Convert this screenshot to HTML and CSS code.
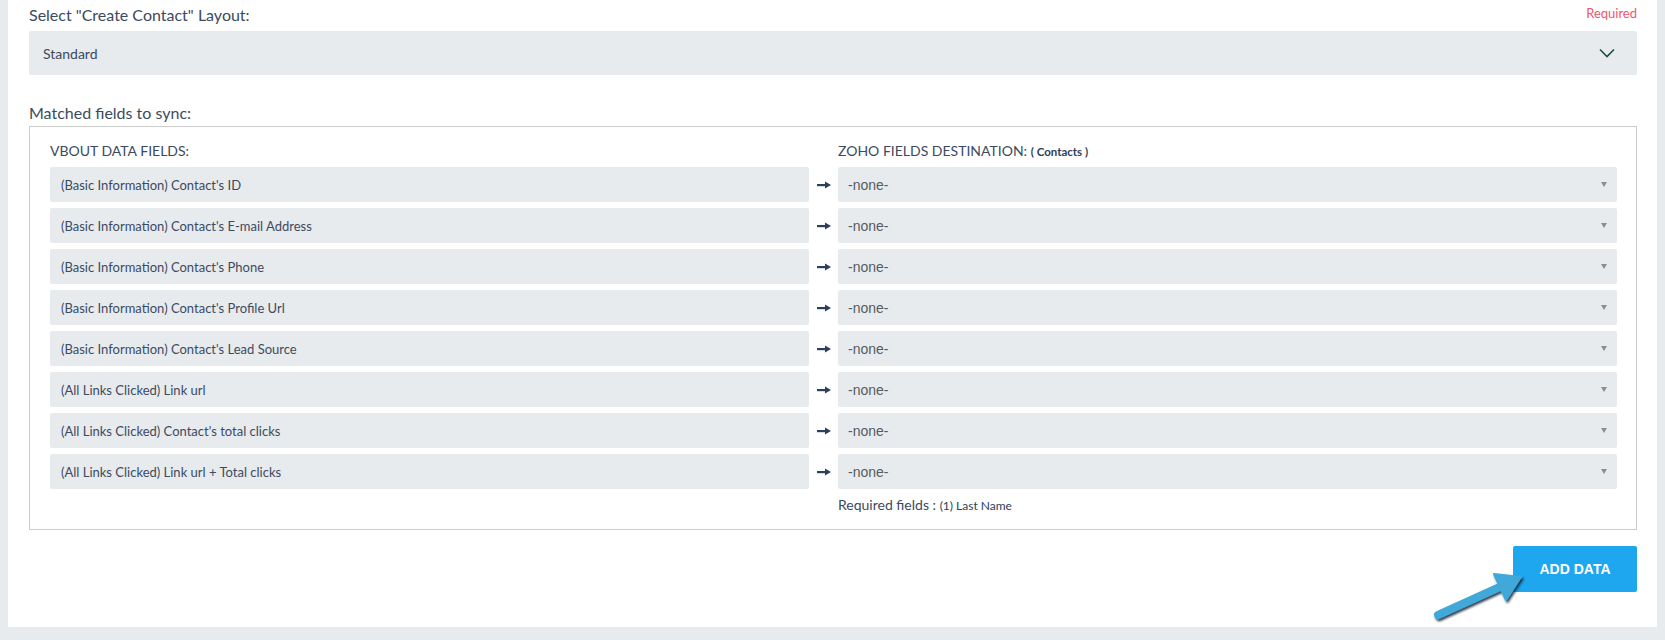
FILE: index.html
```html
<!DOCTYPE html>
<html>
<head>
<meta charset="utf-8">
<link rel="stylesheet" href="styles.css">
</head>
<body>
<div class="panel">
  <div class="label-row">
    <span class="label">Select "Create Contact" Layout:</span>
    <span class="required">Required</span>
  </div>
  <div class="select">
    <span>Standard</span>
    <svg class="chev" width="16" height="10" viewBox="0 0 16 10"><path d="M1 1.5 L8 8.5 L15 1.5" fill="none" stroke="#1d4d40" stroke-width="1.6"/></svg>
  </div>
  <div class="label sync-label">Matched fields to sync:</div>
  <div class="box">
    <div class="grid">
      <div class="head">VBOUT DATA FIELDS:</div>
      <div></div>
      <div class="head">ZOHO FIELDS DESTINATION: <span class="small">( Contacts )</span></div>

      <div class="field">(Basic Information) Contact's ID</div>
      <div class="arrow"><svg width="14" height="8" viewBox="0 0 14 8"><rect x="0" y="3" width="10" height="2.2" fill="#2d3f5e"/><polygon points="8,0.5 14,4.1 8,7.5" fill="#2d3f5e"/></svg></div>
      <div class="dest">-none-<span class="tri"></span></div>

      <div class="field">(Basic Information) Contact's E-mail Address</div>
      <div class="arrow"><svg width="14" height="8" viewBox="0 0 14 8"><rect x="0" y="3" width="10" height="2.2" fill="#2d3f5e"/><polygon points="8,0.5 14,4.1 8,7.5" fill="#2d3f5e"/></svg></div>
      <div class="dest">-none-<span class="tri"></span></div>

      <div class="field">(Basic Information) Contact's Phone</div>
      <div class="arrow"><svg width="14" height="8" viewBox="0 0 14 8"><rect x="0" y="3" width="10" height="2.2" fill="#2d3f5e"/><polygon points="8,0.5 14,4.1 8,7.5" fill="#2d3f5e"/></svg></div>
      <div class="dest">-none-<span class="tri"></span></div>

      <div class="field">(Basic Information) Contact's Profile Url</div>
      <div class="arrow"><svg width="14" height="8" viewBox="0 0 14 8"><rect x="0" y="3" width="10" height="2.2" fill="#2d3f5e"/><polygon points="8,0.5 14,4.1 8,7.5" fill="#2d3f5e"/></svg></div>
      <div class="dest">-none-<span class="tri"></span></div>

      <div class="field">(Basic Information) Contact's Lead Source</div>
      <div class="arrow"><svg width="14" height="8" viewBox="0 0 14 8"><rect x="0" y="3" width="10" height="2.2" fill="#2d3f5e"/><polygon points="8,0.5 14,4.1 8,7.5" fill="#2d3f5e"/></svg></div>
      <div class="dest">-none-<span class="tri"></span></div>

      <div class="field">(All Links Clicked) Link url</div>
      <div class="arrow"><svg width="14" height="8" viewBox="0 0 14 8"><rect x="0" y="3" width="10" height="2.2" fill="#2d3f5e"/><polygon points="8,0.5 14,4.1 8,7.5" fill="#2d3f5e"/></svg></div>
      <div class="dest">-none-<span class="tri"></span></div>

      <div class="field">(All Links Clicked) Contact's total clicks</div>
      <div class="arrow"><svg width="14" height="8" viewBox="0 0 14 8"><rect x="0" y="3" width="10" height="2.2" fill="#2d3f5e"/><polygon points="8,0.5 14,4.1 8,7.5" fill="#2d3f5e"/></svg></div>
      <div class="dest">-none-<span class="tri"></span></div>

      <div class="field">(All Links Clicked) Link url + Total clicks</div>
      <div class="arrow"><svg width="14" height="8" viewBox="0 0 14 8"><rect x="0" y="3" width="10" height="2.2" fill="#2d3f5e"/><polygon points="8,0.5 14,4.1 8,7.5" fill="#2d3f5e"/></svg></div>
      <div class="dest">-none-<span class="tri"></span></div>

      <div></div>
      <div></div>
      <div class="req-fields">Required fields : <span class="small2">(1) Last Name</span></div>
    </div>
  </div>
  <div class="actions">
    <button class="add">ADD DATA</button>
  </div>
  <svg class="pointer" width="110" height="62" viewBox="0 0 110 62">
    <defs>
      <filter id="sh" x="-20%" y="-30%" width="150%" height="170%">
        <feDropShadow dx="1.5" dy="2" stdDeviation="1" flood-color="#0b2230" flood-opacity="0.85"/>
      </filter>
    </defs>
    <g filter="url(#sh)" fill="#3fa9d9" stroke="#3fa9d9">
      <line x1="13" y1="50" x2="77" y2="21" stroke-width="8" stroke-linecap="round"/>
      <polygon points="96,12 81,35 69,9" stroke-width="2" stroke-linejoin="round"/>
    </g>
  </svg>
</div>
</body>
</html>
```
FILE: styles.css
```css
html, body {
  margin: 0;
  padding: 0;
  background: #e8ebee;
}
body {
  font-family: Lato, "Liberation Sans", sans-serif;
  color: #3c4a5e;
}
.panel {
  position: relative;
  margin-left: 8px;
  width: 1649px;
  height: 627px;
  background: #ffffff;
  box-sizing: border-box;
  padding: 5px 20px 0 21px;
}
.label-row {
  display: flex;
  justify-content: space-between;
  align-items: center;
  height: 20px;
}
.label {
  font-size: 16px;
  line-height: 20px;
  color: #3c4a5e;
}
.required {
  font-size: 13px;
  color: #f0566a;
  position: relative;
  top: -2px;
}
.select {
  margin-top: 6px;
  height: 44px;
  background: #e8ebee;
  border-radius: 2px;
  display: flex;
  align-items: center;
  justify-content: space-between;
  padding: 0 22px 0 14px;
  font-size: 14px;
  color: #3c4a5e;
}
.chev {
  display: block;
}
.sync-label {
  margin-top: 28px;
}
.box {
  margin-top: 3px;
  border: 1px solid #cccccc;
  height: 404px;
  box-sizing: border-box;
  padding: 14px 19px 0 20px;
}
.grid {
  display: grid;
  grid-template-columns: 759px 29px 1fr;
  row-gap: 6px;
}
.head {
  font-size: 14px;
  line-height: 20px;
  color: #3c4a5e;
  margin-bottom: -1px;
}
.small {
  font-size: 11.5px;
  font-weight: 700;
  color: #2f3e54;
}
.small2 {
  font-size: 12px;
  color: #2f3e54;
}
.field {
  height: 35px;
  background: #e8ebee;
  border-radius: 2px;
  display: flex;
  align-items: center;
  padding-left: 11px;
  font-size: 13px;
  color: #3c4a5e;
}
.arrow {
  display: flex;
  align-items: center;
  justify-content: center;
  padding-left: 1px;
}
.arrow svg {
  display: block;
}
.dest {
  position: relative;
  height: 35px;
  background: #e8ebee;
  border-radius: 2px;
  display: flex;
  align-items: center;
  padding-left: 10px;
  font-family: "Liberation Sans", Arial, sans-serif;
  font-size: 14px;
  color: #555b63;
}
.tri {
  position: absolute;
  right: 10px;
  top: 15px;
  width: 0;
  height: 0;
  border-left: 3.5px solid transparent;
  border-right: 3.5px solid transparent;
  border-top: 5px solid #8a8d91;
}
.req-fields {
  font-size: 14px;
  line-height: 20px;
  color: #3c4a5e;
}
.actions {
  display: flex;
  justify-content: flex-end;
  margin-top: 16px;
}
.add {
  width: 124px;
  height: 46px;
  border: none;
  border-radius: 2px;
  background: #1ea6ef;
  color: #ffffff;
  font-family: "Liberation Sans", Arial, sans-serif;
  font-weight: 700;
  font-size: 14px;
  padding: 0;
}
.pointer {
  position: absolute;
  left: 1417px;
  top: 565px;
}
```
